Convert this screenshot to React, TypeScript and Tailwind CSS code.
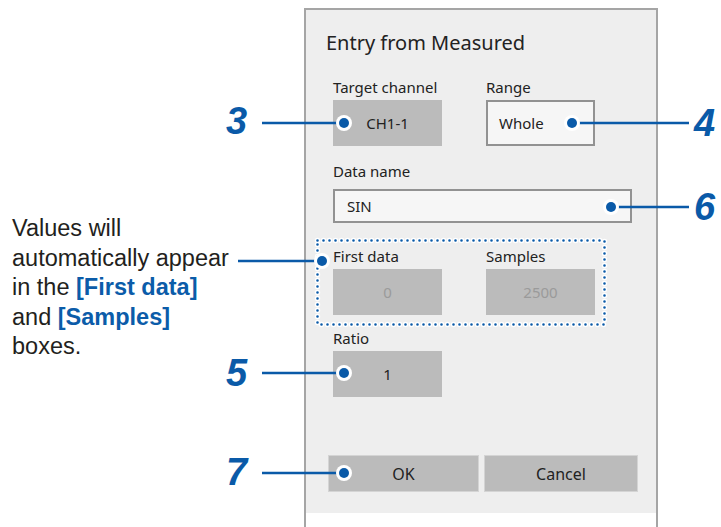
import React from 'react';

const BLUE = '#0a5aa8';

// callout lines: from number to dot
const callouts = [
    { x1: 262, x2: 344, y: 123 },
    { x1: 572, x2: 689, y: 123 },
    { x1: 611, x2: 689, y: 207 },
    { x1: 238, x2: 322, y: 261 },
    { x1: 262, x2: 344, y: 373 },
    { x1: 262, x2: 344, y: 473 },
];

// dot side of each callout
const dots = [
    { x: 344, y: 123 },
    { x: 572, y: 123 },
    { x: 611, y: 207 },
    { x: 322, y: 261 },
    { x: 344, y: 373 },
    { x: 344, y: 473 },
];

const numbers = [
    { n: '3', left: 'left-[226px]', top: 'top-[102px]' },
    { n: '4', left: 'left-[694px]', top: 'top-[104px]' },
    { n: '6', left: 'left-[694px]', top: 'top-[188px]' },
    { n: '5', left: 'left-[226px]', top: 'top-[354px]' },
    { n: '7', left: 'left-[226px]', top: 'top-[453px]' },
];

function Field({ label, value, variant }: { label: string; value: string; variant: 'gray' | 'input' | 'disabled' }) {
    const box =
        variant === 'input'
            ? 'border-2 border-[#929292] bg-[#f6f6f6] justify-start pl-[11px] text-[#222]'
            : variant === 'disabled'
                ? 'bg-[#bbbbbb] justify-center text-[#9a9a9a]'
                : 'bg-[#bbbbbb] justify-center text-[#222]';
    return (
        <div className="w-[109px]">
            <div className="text-[15px] leading-[20px] text-[#222]">{label}</div>
            <div className={`mt-[3px] h-[46px] flex items-center text-[15px] ${box}`}>{value}</div>
        </div>
    );
}

export default function App() {
    return (
        <div className="relative flex w-[721px] h-[527px] overflow-hidden bg-white font-['Liberation_Sans',Arial,sans-serif]">
            {/* left explanation */}
            <div className="w-[304px] shrink-0 pl-[12px] pt-[214px]">
                <p className="text-[23.5px] leading-[29.5px] text-[#231f20]">
                    Values will
                    <br />
                    automatically appear
                    <br />
                    in the <span className="font-bold text-[#0b5ca9]">[First data]</span>
                    <br />
                    and <span className="font-bold text-[#0b5ca9]">[Samples]</span>
                    <br />
                    boxes.
                </p>
            </div>

            {/* dialog */}
            <div className="mt-[8px] w-[354px] h-[519px] border-t-2 border-x-2 border-[#a5a5a5] bg-white shrink-0">
                <div className="h-[503px] bg-[#eeeeee] font-['Noto_Sans',sans-serif]">
                    <div className="pt-[19px] pl-[20px] text-[20px] leading-[28px] text-[#222]">Entry from Measured</div>

                    <div className="pl-[27px]">
                        <div className="mt-[20px] flex gap-[44px]">
                            <Field label="Target channel" value="CH1-1" variant="gray" />
                            <Field label="Range" value="Whole" variant="input" />
                        </div>

                        <div className="mt-[15px]">
                            <div className="text-[15px] leading-[20px] text-[#222]">Data name</div>
                            <div className="mt-[8px] h-[34px] w-[299px] border-2 border-[#929292] bg-[#f6f6f6] flex items-center pl-[12px] text-[15px] text-[#222]">
                                SIN
                            </div>
                        </div>

                        <div className="mt-[23px] flex gap-[44px]">
                            <Field label="First data" value="0" variant="disabled" />
                            <Field label="Samples" value="2500" variant="disabled" />
                        </div>

                        <div className="mt-[13px]">
                            <Field label="Ratio" value="1" variant="gray" />
                        </div>

                        <div className="mt-[58px] -ml-[5px] flex gap-[5px] text-[16px] text-[#222]">
                            <div className="w-[151px] h-[37px] bg-[#bbbbbb] border border-[#d4d4d4] flex items-center justify-center">OK</div>
                            <div className="w-[154px] h-[37px] bg-[#bbbbbb] border border-[#d4d4d4] flex items-center justify-center">Cancel</div>
                        </div>
                    </div>
                </div>
            </div>

            {/* annotation overlay */}
            <svg className="absolute inset-0 pointer-events-none" width="721" height="527" viewBox="0 0 721 527">
                <rect x="317.5" y="240.5" width="287" height="84" fill="none" stroke="#ffffff" strokeWidth="5.5" strokeLinecap="round" strokeDasharray="0 6" />
                <rect x="317.5" y="240.5" width="287" height="84" fill="none" stroke={BLUE} strokeWidth="2.6" strokeLinecap="round" strokeDasharray="0 6" />
                {callouts.map((c, i) => (
                    <line key={i} x1={c.x1} y1={c.y} x2={c.x2} y2={c.y} stroke={BLUE} strokeWidth="2.6" />
                ))}
                {dots.map((d, i) => (
                    <g key={i}>
                        <circle cx={d.x} cy={d.y} r="8" fill="#ffffff" />
                        <circle cx={d.x} cy={d.y} r="5" fill={BLUE} />
                    </g>
                ))}
            </svg>

            {numbers.map((num) => (
                <span
                    key={num.n}
                    className={`absolute ${num.left} ${num.top} text-[38px] leading-[38px] font-bold italic text-[#0a5aa8]`}
                >
                    {num.n}
                </span>
            ))}
        </div>
    );
}
